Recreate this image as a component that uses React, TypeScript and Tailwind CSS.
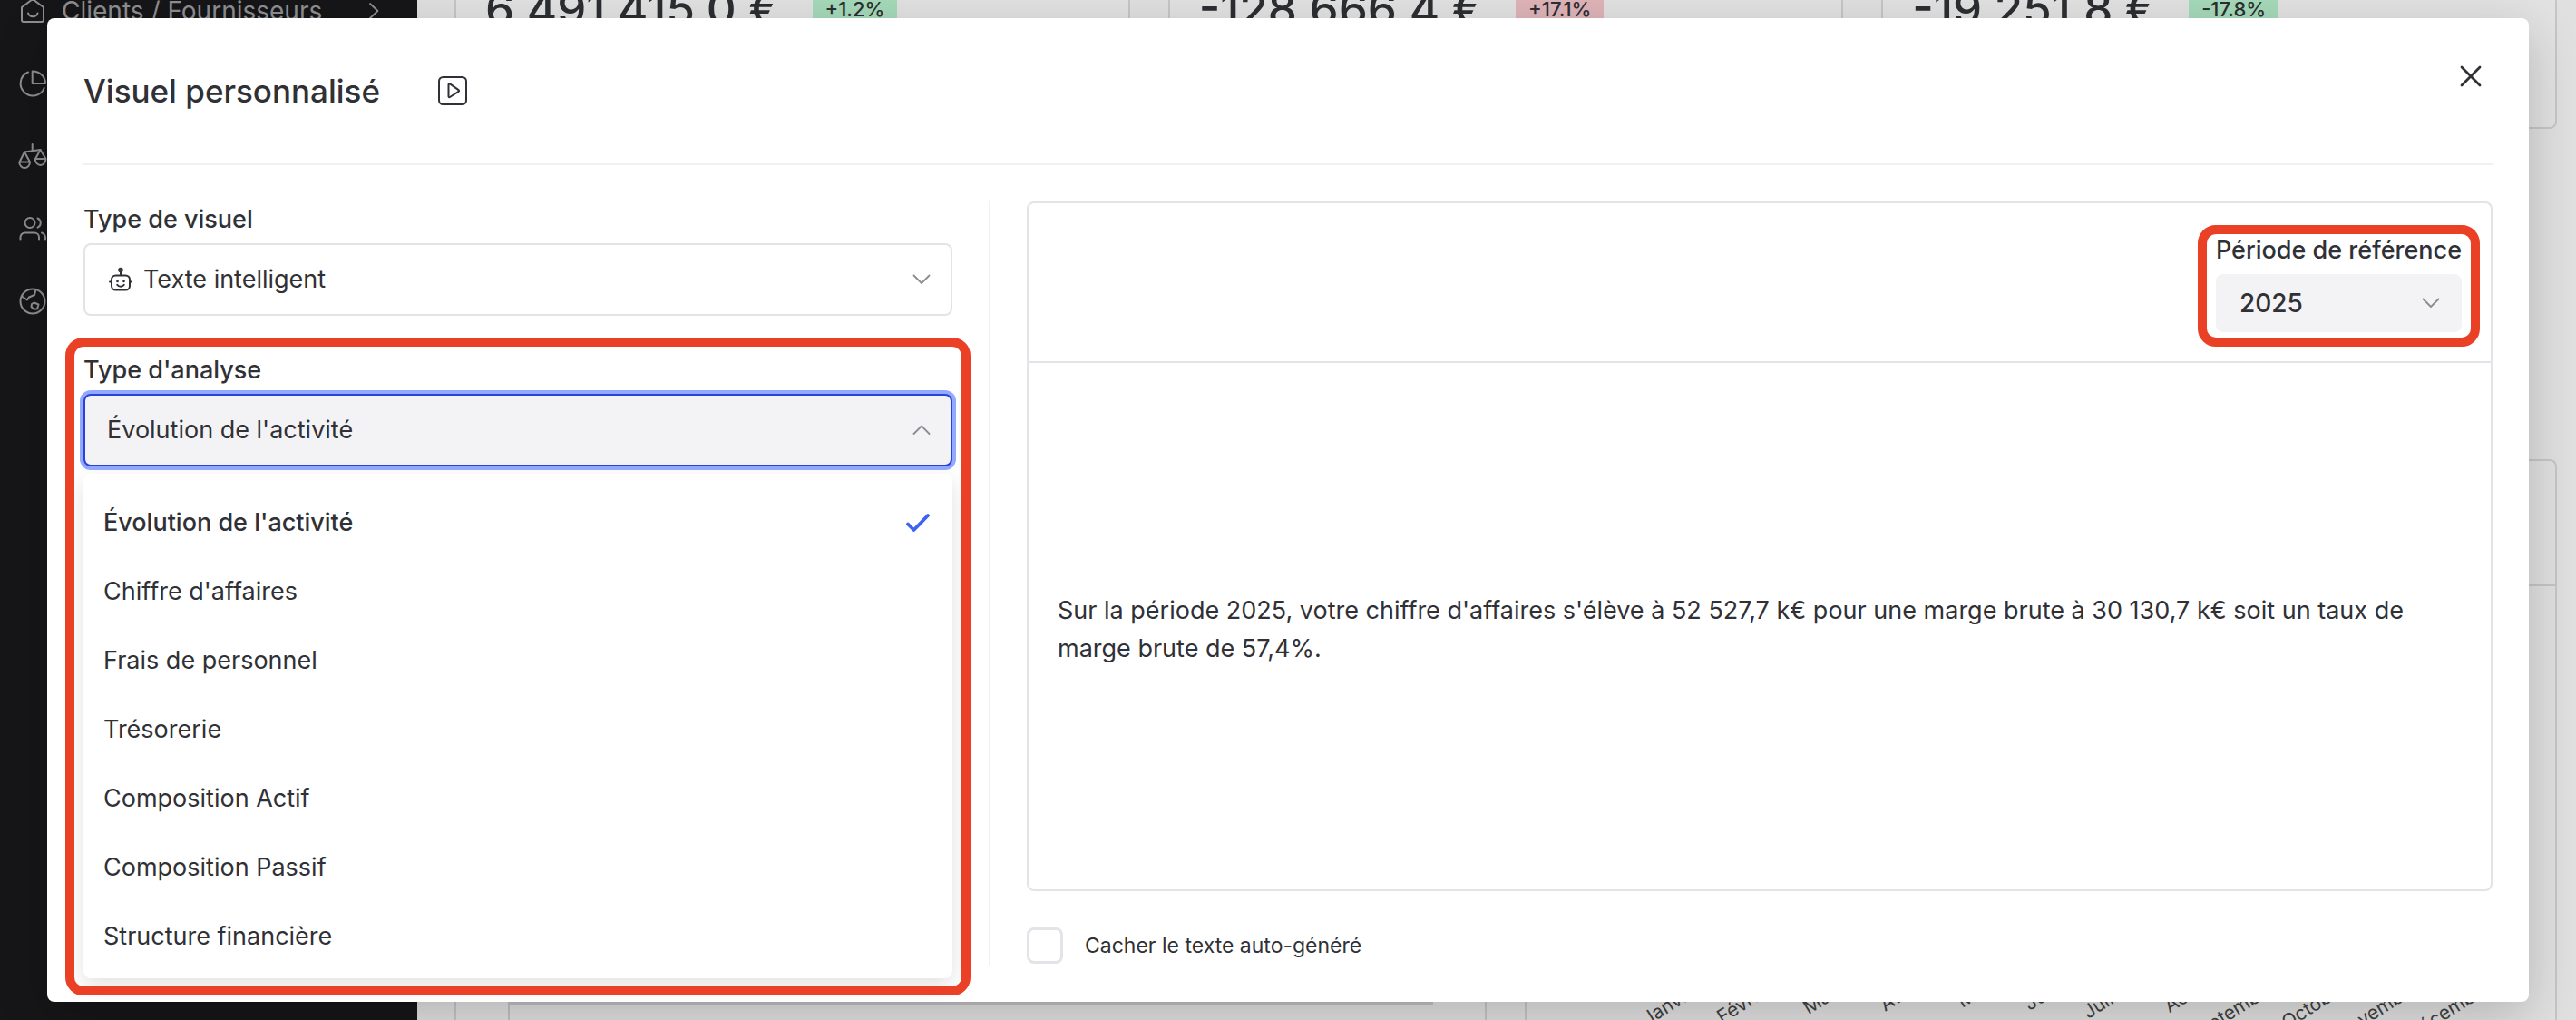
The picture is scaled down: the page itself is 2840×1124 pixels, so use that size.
import { useState } from "react";
import type { ReactNode } from "react";

const analyses = [
  "Évolution de l'activité",
  "Chiffre d'affaires",
  "Frais de personnel",
  "Trésorerie",
  "Composition Actif",
  "Composition Passif",
  "Structure financière",
];

const kpis = [
  { value: "6 491 415,0 €", delta: "+1.2%", tone: "bg-[#a5dab9]" },
  { value: "-128 666,4 €", delta: "+17.1%", tone: "bg-[#dfb4b9]" },
  { value: "-19 251,8 €", delta: "-17.8%", tone: "bg-[#a5dab9]" },
];

const months = [
  "Janvier",
  "Février",
  "Mars",
  "Avril",
  "Mai",
  "Juin",
  "Juillet",
  "Août",
  "Septembre",
  "Octobre",
  "Novembre",
  "Décembre",
];

function NavIcon({ children }: { children: ReactNode }) {
  return (
    <svg
      viewBox="0 0 32 32"
      className="size-8 shrink-0"
      fill="none"
      stroke="currentColor"
      strokeWidth="2"
      strokeLinecap="round"
      strokeLinejoin="round"
      aria-hidden="true"
    >
      {children}
    </svg>
  );
}

function Chevron({ up = false }: { up?: boolean }) {
  return (
    <svg
      viewBox="0 0 20 12"
      className="pointer-events-none h-3 w-5 text-[#8c8d91]"
      fill="none"
      stroke="currentColor"
      strokeWidth="1.8"
      strokeLinecap="round"
      strokeLinejoin="round"
      aria-hidden="true"
    >
      <path d={up ? "M1.5 10 10 1.5 18.500 10" : "M1.5 1.500 10 10l8.500-8.500"} />
    </svg>
  );
}

function Sidebar() {
  return (
    <nav className="w-[460px] shrink-0 bg-[#161618] text-[#8f8f92]" aria-label="Navigation">
      <ul className="-mt-7 pl-5">
        <li>
          <a href="#clients" className="flex h-20 items-center pr-10 text-[28px]">
            <NavIcon>
              <path d="M4 12 16 3l12 9v14a2 2 0 0 1-2 2H6a2 2 0 0 1-2-2z" />
              <path d="M11 18.500c1.500 5 9 5 10.500 0" />
            </NavIcon>
            <span className="ml-4 flex-1">Clients / Fournisseurs</span>
            <svg
              viewBox="0 0 14 20"
              className="h-5 w-3.5"
              fill="none"
              stroke="currentColor"
              strokeWidth="1.8"
              strokeLinecap="round"
              strokeLinejoin="round"
              aria-hidden="true"
            >
              <path d="m2 2 8.500 8L2 18" />
            </svg>
          </a>
        </li>
        <li>
          <a href="#analyses" aria-label="Analyses" className="flex h-20 items-center">
            <NavIcon>
              <path d="M15.700 2.500V16H30A14 13.500 0 0 0 15.700 2.500Z" />
              <path d="M11 3.500a13.500 13.500 0 1 0 17.700 17.500" />
            </NavIcon>
          </a>
        </li>
        <li>
          <a href="#bilan" aria-label="Bilan" className="flex h-20 items-center">
            <NavIcon>
              <path d="M15.700 3v7M7 11.500l17.500-2.500" />
              <path d="M7 11.500 1.500 22.500h11.500zM1.300 22.500a5.800 6.500 0 0 0 11.700 0" />
              <path d="M24.500 9 19 19h11.500zM18.700 19a5.900 7 0 0 0 11.800 0" />
            </NavIcon>
          </a>
        </li>
        <li>
          <a href="#equipe" aria-label="Équipe" className="flex h-20 items-center">
            <NavIcon>
              <circle cx="13" cy="9.500" r="5.500" />
              <path d="M21.500 4.500a5.600 5.600 0 0 1 0 10.200" />
              <path d="M2.500 28.500v-3a5 5 0 0 1 5-5h10.500a5 5 0 0 1 5 5v3" />
              <path d="M26 20.500a6 6 0 0 1 4 5.500v2.500" />
            </NavIcon>
          </a>
        </li>
        <li>
          <a href="#monde" aria-label="Environnement" className="flex h-20 items-center">
            <NavIcon>
              <circle cx="16" cy="16" r="13.500" />
              <path d="m4 10.500 6 4 2-3 6-2.500 1.500-6" />
              <path d="m15 19 2.500-1.500 5 2-1.500 5h-4l-2.500-2.500z" />
            </NavIcon>
          </a>
        </li>
      </ul>
    </nav>
  );
}

function Dashboard() {
  return (
    <main className="flex min-w-0 flex-1 flex-col bg-[#e0e0e1] pr-[21px] pl-[41px]">
      <div className="-mt-8 flex gap-[42px]">
        {kpis.map((kpi) => (
          <section
            key={kpi.value}
            className="flex h-[174px] flex-1 items-start gap-9 rounded-lg border-2 border-[#c6c6c9] bg-[#e2e2e2] px-8 pt-2"
          >
            <p className="text-[51px] leading-[64px] font-medium whitespace-nowrap text-[#2c2e31]">
              {kpi.value}
            </p>
            <span
              className={`mt-3 px-3.5 py-1 text-[22px] leading-8 font-medium text-[#2c2e31] ${kpi.tone}`}
            >
              {kpi.delta}
            </span>
          </section>
        ))}
      </div>
      <div className="mt-[364px] flex flex-1 gap-[42px]">
        <section className="flex-1 rounded-t-lg border-2 border-b-0 border-[#c6c6c9] bg-[#e0e1e0]">
          <div className="h-[138px] border-b-2 border-[#c6c6c9]" />
          <div className="mx-[57px] mt-[457px] h-20 border-t-4 border-l-2 border-[#c2c2c5]" />
        </section>
        <section className="flex-1 rounded-t-lg border-2 border-b-0 border-[#c6c6c9] bg-[#e0e1e0]">
          <div className="h-[138px] border-b-2 border-[#c6c6c9]" />
          <svg viewBox="0 0 1134 478" className="w-full" aria-label="Mois">
            {months.map((m, i) => (
              <text
                key={m}
                x={195 + i * 79}
                y={446}
                textAnchor="end"
                fontSize="21"
                fill="#3f4042"
                transform={`rotate(-32 ${195 + i * 79} 446)`}
              >
                {m}
              </text>
            ))}
          </svg>
        </section>
      </div>
    </main>
  );
}

function AnalysisPicker() {
  const [selected, setSelected] = useState(analyses[0]);
  return (
    <div className="relative mt-10">
      <span id="analysis-label" className="block font-medium">
        Type d'analyse
      </span>
      <button
        type="button"
        aria-haspopup="listbox"
        aria-expanded="true"
        aria-labelledby="analysis-label"
        className="mt-1.5 flex h-20 w-full items-center justify-between rounded-lg border-2 border-[#2743d8] bg-[#f3f3f5] pr-[22px] pl-6 ring-4 ring-[#92a9fd]"
      >
        {selected}
        <Chevron up />
      </button>
      <ul
        role="listbox"
        aria-labelledby="analysis-label"
        className="absolute inset-x-0 top-full mt-2 rounded-lg bg-white pt-4 pb-2 shadow-[0_8px_24px_rgba(0,0,0,0.12)]"
      >
        {analyses.map((name) => (
          <li
            key={name}
            role="option"
            aria-selected={name === selected}
            onClick={() => setSelected(name)}
            className="flex h-[76px] cursor-pointer items-center justify-between pr-6 pl-[22px] aria-selected:font-medium"
          >
            {name}
            {name === selected && (
              <svg
                viewBox="0 0 28 22"
                className="h-[22px] w-7"
                fill="none"
                stroke="#3d62f5"
                strokeWidth="3.8"
                strokeLinecap="round"
                strokeLinejoin="round"
                aria-hidden="true"
              >
                <path d="m3 12.500 6.500 6.500L25 3" />
              </svg>
            )}
          </li>
        ))}
      </ul>
      <div className="pointer-events-none absolute -inset-x-5 -top-4 h-[725px] rounded-[20px] border-10 border-[#ea4026]" />
    </div>
  );
}

export default function App() {
  return (
    <div className="relative flex h-screen overflow-hidden font-['Inter',sans-serif] text-[27px] leading-10 text-[#303136]">
      <Sidebar />
      <Dashboard />
      <div className="absolute inset-0 flex px-[52px] py-5">
        <div
          role="dialog"
          aria-modal="true"
          aria-labelledby="dialog-title"
          className="flex flex-1 flex-col rounded-lg bg-white px-10 pb-10 shadow-[0_16px_56px_rgba(0,0,0,0.2)]"
        >
          <header className="flex h-[162px] items-center border-b-2 border-[#f1f1f3]">
            <h1 id="dialog-title" className="text-[35px] font-medium">
              Visuel personnalisé
            </h1>
            <button type="button" aria-label="Voir la vidéo" className="ml-16">
              <svg
                viewBox="0 0 32 32"
                className="size-8"
                fill="none"
                stroke="currentColor"
                strokeWidth="2"
                strokeLinejoin="round"
                aria-hidden="true"
              >
                <rect x="1" y="1" width="30" height="30" rx="4.500" />
                <path d="M11.500 9.200c0-.8.800-1.200 1.500-.8l9.500 6.700c.7.500.7 1.400 0 1.800L13 23c-.7.400-1.500 0-1.500-.8z" />
              </svg>
            </button>
            <button type="button" aria-label="Fermer" className="mt-12 mr-2 ml-auto self-start">
              <svg
                viewBox="0 0 32 32"
                className="size-8"
                fill="none"
                stroke="currentColor"
                strokeWidth="2.8"
                strokeLinecap="round"
                aria-hidden="true"
              >
                <path d="m6 6 20 20M26 6 6 26" />
              </svg>
            </button>
          </header>

          <div className="grid flex-1 grid-cols-[1000fr_1616fr] gap-10 pt-10">
            <div className="border-r-2 border-[#f1f1f3] pr-10">
              <label htmlFor="visual" className="block font-medium">
                Type de visuel
              </label>
              <div className="relative mt-1.5 flex items-center">
                <svg
                  viewBox="0 0 26 28"
                  className="pointer-events-none absolute left-7 h-7 w-[26px]"
                  fill="none"
                  stroke="currentColor"
                  strokeWidth="2"
                  strokeLinecap="round"
                  aria-hidden="true"
                >
                  <circle cx="13" cy="3.500" r="1.800" />
                  <path d="M13 5.500v3.500M1 16.500h1.500M23.500 16.500H25M9.200 19.800c1.800 2.600 5.800 2.600 7.600 0" />
                  <rect x="3" y="9.500" width="20" height="16" rx="4.500" />
                  <path d="M9.500 15.800v.2M16.500 15.800v.2" strokeWidth="2.600" />
                </svg>
                <select
                  id="visual"
                  className="h-20 w-full appearance-none rounded-lg border-2 border-[#e3e3e8] bg-white pr-14 pl-16"
                >
                  <option>Texte intelligent</option>
                </select>
                <span className="pointer-events-none absolute right-6">
                  <Chevron />
                </span>
              </div>
              <AnalysisPicker />
            </div>

            <div className="flex flex-col pb-0.5">
              <section className="flex flex-1 flex-col rounded-lg border-2 border-[#e3e3e8]">
                <div className="flex justify-end border-b-2 border-[#e3e3e8] p-8">
                  <div className="relative">
                    <label htmlFor="period" className="block font-medium">
                      Période de référence
                    </label>
                    <div className="relative mt-1.5 flex items-center">
                      <select
                        id="period"
                        className="h-16 w-full appearance-none rounded-lg bg-[#f3f3f5] pr-14 pl-[26px] text-[28px] font-medium"
                      >
                        <option>2025</option>
                      </select>
                      <span className="pointer-events-none absolute right-6">
                        <Chevron />
                      </span>
                    </div>
                    <div className="pointer-events-none absolute -inset-x-5 -top-2 -bottom-4 rounded-[20px] border-10 border-[#ea4026]" />
                  </div>
                </div>
                <p className="flex flex-1 items-center px-8 pt-2 leading-[42px]">
                  Sur la période 2025, votre chiffre d'affaires s'élève à 52 527,7 k€ pour une marge
                  brute à 30 130,7 k€ soit un taux de marge brute de 57,4%.
                </p>
              </section>
              <label className="mt-10 flex items-center gap-6 self-start text-[23px]">
                <input
                  type="checkbox"
                  className="size-10 appearance-none rounded-lg border-3 border-[#e3e3e8] bg-white checked:bg-[#3d62f5]"
                />
                Cacher le texte auto-généré
              </label>
            </div>
          </div>
        </div>
      </div>
    </div>
  );
}
